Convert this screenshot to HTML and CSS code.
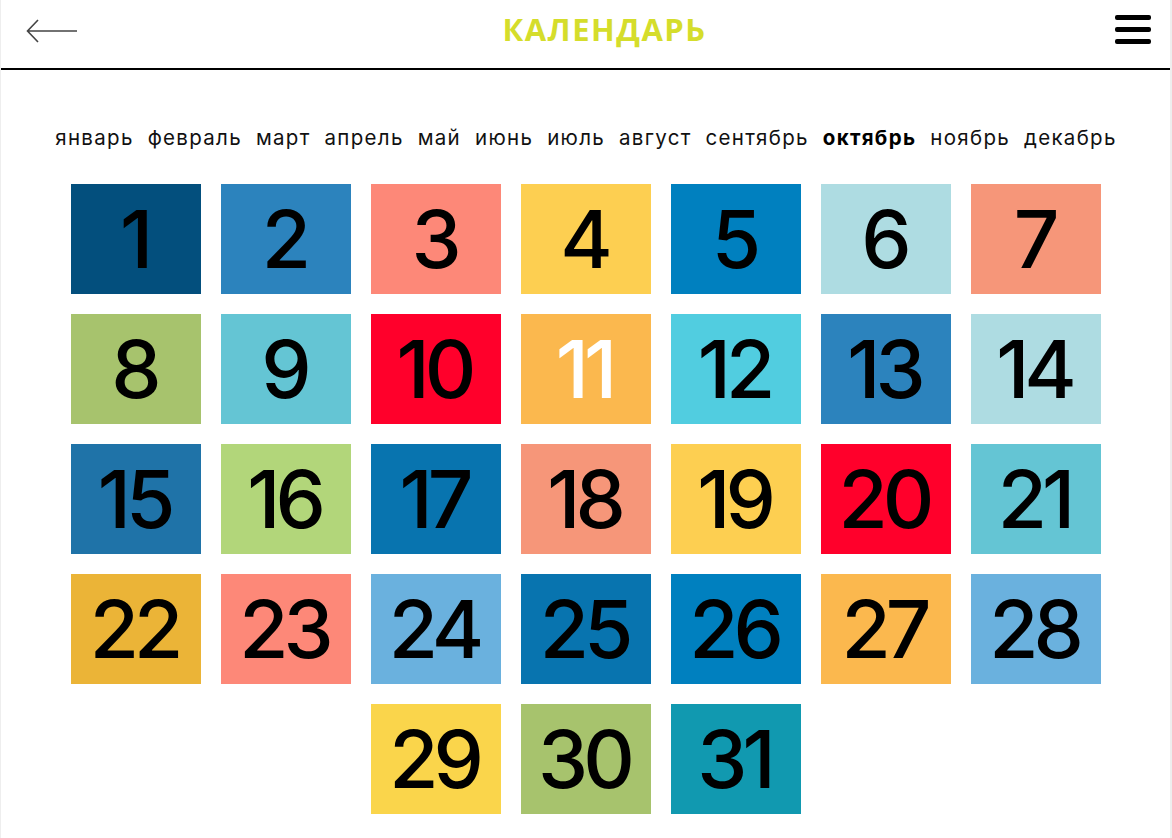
FILE: index.html
```html
<!DOCTYPE html>
<html lang="ru">
<head>
<meta charset="utf-8">
<title>Календарь</title>
<link rel="stylesheet" href="styles.css">
</head>
<body>
<div class="page">
  <header class="header">
    <a class="back" href="#" aria-label="Назад">
      <svg width="52" height="28" viewBox="0 0 52 28"><path d="M51 14H2M12 3L1.5 14L12 25" fill="none" stroke="#444" stroke-width="1.6"/></svg>
    </a>
    <h1 class="title">КАЛЕНДАРЬ</h1>
    <a class="menu" href="#" aria-label="Меню">
      <span></span><span></span><span></span>
    </a>
  </header>
  <nav class="months">
    <a href="#">январь</a>
    <a href="#">февраль</a>
    <a href="#">март</a>
    <a href="#">апрель</a>
    <a href="#">май</a>
    <a href="#">июнь</a>
    <a href="#">июль</a>
    <a href="#">август</a>
    <a href="#">сентябрь</a>
    <a href="#" class="active">октябрь</a>
    <a href="#">ноябрь</a>
    <a href="#">декабрь</a>
  </nav>
  <main class="days">
    <div class="day c1">1</div>
    <div class="day c2">2</div>
    <div class="day c3">3</div>
    <div class="day c4">4</div>
    <div class="day c5">5</div>
    <div class="day c6">6</div>
    <div class="day c7">7</div>
    <div class="day c8">8</div>
    <div class="day c9">9</div>
    <div class="day c10">10</div>
    <div class="day c11 light">11</div>
    <div class="day c12">12</div>
    <div class="day c2">13</div>
    <div class="day c6">14</div>
    <div class="day c15">15</div>
    <div class="day c16">16</div>
    <div class="day c17">17</div>
    <div class="day c7">18</div>
    <div class="day c4">19</div>
    <div class="day c10">20</div>
    <div class="day c9">21</div>
    <div class="day c22">22</div>
    <div class="day c3">23</div>
    <div class="day c24">24</div>
    <div class="day c17">25</div>
    <div class="day c5">26</div>
    <div class="day c11">27</div>
    <div class="day c24">28</div>
    <div class="day c29">29</div>
    <div class="day c8">30</div>
    <div class="day c31">31</div>
  </main>
</div>
</body>
</html>
```
FILE: styles.css
```css
* { box-sizing: border-box; }
html, body { margin: 0; padding: 0; background: #fff; }
body { font-family: Inter, "Noto Sans", sans-serif; color: #000; }
.page {
  width: 1172px;
  height: 838px;
  overflow: hidden;
  border-left: 1px solid #eee;
  border-right: 2px solid #eee;
}
.header {
  height: 70px;
  border-bottom: 2px solid #000;
  display: flex;
  align-items: center;
  padding: 0 19px 10px 25px;
}
.back { display: flex; width: 52px; height: 28px; margin-top: 3px; }
.title {
  flex: 1;
  margin: 0;
  padding-left: 16px;
  text-align: center;
  font-family: "Open Sans", sans-serif;
  font-weight: 700;
  font-size: 31px;
  letter-spacing: 1.5px;
  color: #d5dd2b;
}
.menu {
  display: flex;
  flex-direction: column;
  gap: 7px;
  width: 36px;
}
.menu span {
  display: block;
  height: 5px;
  border-radius: 2px;
  background: #000;
}
.months {
  display: flex;
  justify-content: center;
  gap: 14px;
  padding: 54px 0 0 1px;
  height: 114px;
}
.months a {
  font-size: 20.5px;
  line-height: 28px;
  color: #111;
  text-decoration: none;
  letter-spacing: 1.3px;
}
.months a.active { font-weight: 700; color: #000; }
.days {
  display: flex;
  flex-wrap: wrap;
  justify-content: center;
  gap: 20px;
  width: 1031px;
  margin: 0 auto;
  padding-left: 1px;
}
.day {
  width: 130px;
  height: 110px;
  display: flex;
  align-items: center;
  justify-content: center;
  font-size: 80px;
  font-weight: 500;
  letter-spacing: -5px;
  padding-right: 4px;
  line-height: 1;
  color: #000;
}
.day.light { color: #fff; }
.c1 { background: #034f7d; }
.c2 { background: #2c83bd; }
.c3 { background: #fd8878; }
.c4 { background: #fdcf51; }
.c5 { background: #0080bf; }
.c6 { background: #aedce2; }
.c7 { background: #f69679; }
.c8 { background: #a7c36d; }
.c9 { background: #64c5d4; }
.c10 { background: #ff002b; }
.c11 { background: #fbb84e; }
.c12 { background: #51cde0; }
.c15 { background: #1f73a8; }
.c16 { background: #b2d67a; }
.c17 { background: #0874af; }
.c22 { background: #ebb437; }
.c24 { background: #6ab1de; }
.c29 { background: #fad54b; }
.c31 { background: #1199b0; }
```
